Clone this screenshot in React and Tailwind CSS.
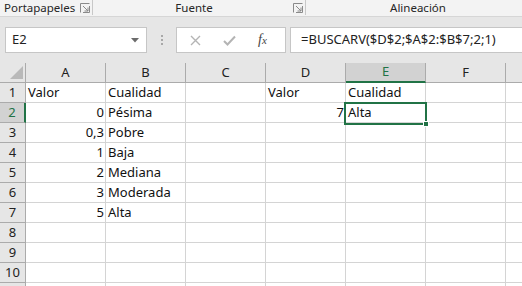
import React from 'react';

const cols = ['A', 'B', 'C', 'D', 'E', 'F', 'G'];

const data = {
  1: { A: 'Valor', B: 'Cualidad', D: 'Valor', E: 'Cualidad' },
  2: { A: 0, B: 'Pésima', D: 7, E: 'Alta' },
  3: { A: '0,3', B: 'Pobre' },
  4: { A: 1, B: 'Baja' },
  5: { A: 2, B: 'Mediana' },
  6: { A: 3, B: 'Moderada' },
  7: { A: 5, B: 'Alta' },
};

const Launcher = () => (
  <svg width="10" height="10" viewBox="0 0 10 10" className="shrink-0">
    <path d="M0.5 9.5V0.5H9.5" fill="none" stroke="#8a8a8a" />
    <path d="M3 3L8 8M8 4.5V8H4.5" fill="none" stroke="#8a8a8a" />
    <path d="M9.5 3V9.5H3" fill="none" stroke="#8a8a8a" />
  </svg>
);

const Cell = ({ value }) => {
  const isNum = typeof value === 'number' || value === '0,3';
  return (
    <div
      className={`h-[20px] border-r border-b border-[#d4d4d4] bg-white flex items-end pb-[1px] overflow-visible whitespace-nowrap text-[13px] leading-[17px] text-[#111] ${
        isNum ? 'justify-end pr-[1px]' : 'pl-[2px]'
      }`}
    >
      {value}
    </div>
  );
};

export default function App() {
  const rows = Array.from({ length: 11 }, (_, i) => i + 1);

  return (
    <div className="w-[522px] h-[286px] overflow-hidden bg-white font-['Noto_Sans',sans-serif] text-[#222]">
      {/* ribbon group labels */}
      <div className="h-[17px] bg-[#f3f3f3] border-b border-[#d6d6d6] flex items-start text-[11.5px] leading-[15px] text-[#262626]">
        <div className="w-[93px] h-[15px] flex items-center pl-[4px] pr-[2px] border-r border-[#c8c8c8]">
          <span className="flex-1">Portapapeles</span>
          <Launcher />
        </div>
        <div className="w-[213px] h-[15px] flex items-center pr-[2px] border-r border-[#c8c8c8]">
          <span className="flex-1 text-center pl-[2px]">Fuente</span>
          <Launcher />
        </div>
        <div className="flex-1 h-[15px] text-center pl-[8px]">Alineación</div>
      </div>

      {/* formula bar */}
      <div className="h-[46px] bg-[#e6e6e6] flex items-start pt-[10px]">
        <div className="ml-[5px] w-[142px] h-[26px] bg-white border border-[#c6c6c6] flex items-center justify-between pl-[6px] pr-[7px]">
          <span className="text-[13px] text-[#222]">E2</span>
          <svg width="8" height="5" viewBox="0 0 8 5">
            <path d="M0 0H8L4 4.5Z" fill="#6b6b6b" />
          </svg>
        </div>
        <div className="w-[29px] h-[26px] flex flex-col items-center justify-center gap-[2px]">
          <span className="w-[2px] h-[2px] bg-[#a8a8a8]" />
          <span className="w-[2px] h-[2px] bg-[#a8a8a8]" />
          <span className="w-[2px] h-[2px] bg-[#a8a8a8]" />
        </div>
        <div className="w-[110px] h-[26px] bg-white border border-[#c6c6c6] flex items-center pl-[13px] gap-[22px]">
          <svg width="11" height="11" viewBox="0 0 11 11">
            <path d="M1 1L10 10M10 1L1 10" stroke="#b4b4b4" strokeWidth="1.4" fill="none" />
          </svg>
          <svg width="13" height="11" viewBox="0 0 13 11">
            <path d="M1 6L4.5 9.5L12 1.5" stroke="#b4b4b4" strokeWidth="2" fill="none" />
          </svg>
          <span className="font-['Liberation_Serif',serif] italic text-[14px] text-[#444] leading-none">
            f<span className="text-[11px]">x</span>
          </span>
        </div>
        <div className="ml-[4px] flex-1 min-w-0 h-[26px] bg-white border border-[#c6c6c6] border-r-0 flex items-center pl-[10px] text-[13px] text-[#222] whitespace-nowrap">
          =BUSCARV($D$2;$A$2:$B$7;2;1)
        </div>
      </div>

      {/* grid */}
      <div className="relative">
        <div className="grid grid-cols-[26px_80px_80px_80px_80px_80px_80px_80px]">
          {/* header row */}
          <div className="h-[20px] bg-[#e6e6e6] border-r border-b border-[#ababab] flex items-end justify-end">
            <svg width="16" height="14" viewBox="0 0 16 14" className="mb-[2px] mr-[1px]">
              <path d="M15 0V13H2Z" fill="#b9b9b9" />
            </svg>
          </div>
          {cols.map((c) => (
            <div
              key={c}
              className={`h-[20px] flex items-center justify-center text-[13px] border-r ${
                c === 'E'
                  ? 'bg-[#d2d2d2] text-[#217346] border-b-2 border-b-[#217346] border-r-[#ababab]'
                  : 'bg-[#e6e6e6] text-[#222] border-b border-[#ababab]'
              }`}
            >
              {c === 'G' ? '' : c}
            </div>
          ))}

          {rows.map((r) => (
            <React.Fragment key={r}>
              <div
                className={`h-[20px] flex items-center justify-center text-[13px] border-b border-[#ababab] ${
                  r === 2
                    ? 'bg-[#d2d2d2] text-[#217346] border-r-2 border-r-[#217346]'
                    : 'bg-[#e6e6e6] text-[#222] border-r'
                }`}
              >
                {r < 11 ? r : ''}
              </div>
              {cols.map((c) => (
                <Cell key={c} value={data[r]?.[c] ?? ''} />
              ))}
            </React.Fragment>
          ))}
        </div>

        {/* active cell E2 */}
        <div className="absolute left-[344px] top-[39px] w-[83px] h-[23px] border-2 border-[#217346] pointer-events-none" />
        <div className="absolute left-[423px] top-[58px] w-[6px] h-[6px] bg-[#217346] border border-white" />
      </div>
    </div>
  );
}
